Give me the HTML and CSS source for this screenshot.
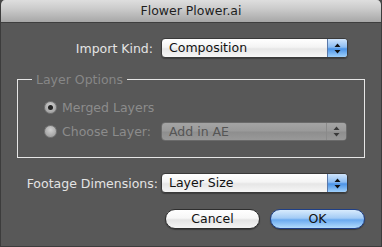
FILE: index.html
```html
<!DOCTYPE html>
<html>
<head>
<meta charset="utf-8">
<link rel="stylesheet" href="styles.css">
</head>
<body>
<div class="window">
  <div class="titlebar">Flower Plower.ai</div>
  <div class="content">
    <div class="row">
      <span class="label label-import">Import Kind:</span>
      <div class="popup">
        <span class="popup-text">Composition</span>
        <span class="popup-arrows"><svg width="7" height="11" viewBox="0 0 7 11"><path d="M3.5 0.5 L6.5 4 L0.5 4 Z M0.5 7 L6.5 7 L3.5 10.5 Z" fill="#111"/></svg></span>
      </div>
    </div>
    <fieldset class="group">
      <legend>Layer Options</legend>
      <div class="radio-row">
        <span class="radio checked"></span>
        <span class="radio-label">Merged Layers</span>
      </div>
      <div class="radio-row">
        <span class="radio"></span>
        <span class="radio-label">Choose Layer:</span>
        <div class="popup disabled">
          <span class="popup-text">Add in AE</span>
          <span class="popup-arrows"><svg width="7" height="11" viewBox="0 0 7 11"><path d="M3.5 0.5 L6.5 4 L0.5 4 Z M0.5 7 L6.5 7 L3.5 10.5 Z" fill="#3a3a3a"/></svg></span>
        </div>
      </div>
    </fieldset>
    <div class="row row-footage">
      <span class="label label-footage">Footage Dimensions:</span>
      <div class="popup">
        <span class="popup-text">Layer Size</span>
        <span class="popup-arrows"><svg width="7" height="11" viewBox="0 0 7 11"><path d="M3.5 0.5 L6.5 4 L0.5 4 Z M0.5 7 L6.5 7 L3.5 10.5 Z" fill="#111"/></svg></span>
      </div>
    </div>
    <div class="buttons">
      <button class="btn">Cancel</button>
      <button class="btn btn-default">OK</button>
    </div>
  </div>
</div>
</body>
</html>
```
FILE: styles.css
```css
html, body {
  margin: 0;
  padding: 0;
  background: #4a4a4a;
}
body {
  font-family: "DejaVu Sans", "Liberation Sans", sans-serif;
  font-size: 12.5px;
}
.window {
  width: 382px;
  height: 247px;
  box-sizing: border-box;
  background: #585858;
  border: 1px solid #3c3c3c;
  border-top: none;
  border-radius: 5px 5px 0 0;
  overflow: hidden;
  display: flex;
  flex-direction: column;
}
.titlebar {
  height: 22px;
  line-height: 22px;
  text-align: center;
  color: #1e1e1e;
  background: linear-gradient(#dedede, #cbcbcb 40%, #a7a7a7);
  border-bottom: 1px solid #3e3e3e;
  flex: none;
}
.content {
  padding: 15px 16px 0 16px;
  display: flex;
  flex-direction: column;
}
.row {
  display: flex;
  align-items: center;
  justify-content: flex-end;
  padding-right: 17px;
  height: 20px;
}
.label {
  color: #e4e4e4;
}
.label-import { margin-right: 8px; }
.label-footage { margin-right: 3px; }
.popup {
  width: 187px;
  height: 20px;
  box-sizing: border-box;
  border: 1px solid #3a3a3a;
  border-radius: 4px;
  background: linear-gradient(#ffffff, #f4f4f4 45%, #e6e6e6 55%, #f6f6f6);
  display: flex;
  align-items: center;
  overflow: hidden;
  box-shadow: 0 1px 1px rgba(0,0,0,0.3);
}
.popup-text {
  flex: 1;
  padding-left: 7px;
  color: #111;
  line-height: 18px;
}
.popup-arrows {
  width: 19px;
  height: 18px;
  display: flex;
  align-items: center;
  justify-content: center;
  background: linear-gradient(#cfe4fb, #8dbdf2 45%, #4b93e6 55%, #9fd0fb);
  border-left: 1px solid #5a78a8;
}
.popup.disabled {
  width: 186px;
  height: 19px;
  margin-left: auto;
  border-color: #6a6a6a;
  background: linear-gradient(#a4a4a4, #9a9a9a 45%, #8e8e8e 55%, #999);
  box-shadow: none;
}
.popup.disabled .popup-text {
  color: #555;
  line-height: 17px;
}
.popup.disabled .popup-arrows {
  height: 17px;
  background: linear-gradient(#a4a4a4, #9a9a9a 45%, #8e8e8e 55%, #999);
  border-left: 1px solid #8a8a8a;
}
.group {
  margin: 14px 0 0 0;
  padding: 10px 17px 16px 14px;
  border: 1px solid #e6e6e6;
  display: flex;
  flex-direction: column;
  gap: 4px;
}
.group legend {
  padding: 0 4px;
  color: #878787;
  line-height: 15px;
}
.radio-row {
  display: flex;
  align-items: center;
  height: 20px;
  margin-left: 12px;
}
.radio {
  width: 13px;
  height: 13px;
  box-sizing: border-box;
  border-radius: 50%;
  border: 1px solid #777;
  background: radial-gradient(circle at 50% 35%, #cfcfcf, #a5a5a5 70%, #9a9a9a);
  margin-right: 5px;
  display: flex;
  align-items: center;
  justify-content: center;
  flex: none;
}
.radio.checked::after {
  content: "";
  width: 5px;
  height: 5px;
  border-radius: 50%;
  background: #222;
}
.radio-label {
  color: #8c8c8c;
}
.row-footage {
  margin-top: 15px;
}
.buttons {
  margin-top: 16px;
  display: flex;
  justify-content: flex-end;
  gap: 10px;
}
.btn {
  width: 95px;
  height: 20px;
  border-radius: 10px;
  border: 1px solid #2e2e2e;
  font-family: "DejaVu Sans", "Liberation Sans", sans-serif;
  font-size: 12.5px;
  color: #111;
  padding: 0;
  line-height: 18px;
  background: linear-gradient(#ffffff, #f7f7f7 45%, #e4e4e4 55%, #f4f4f4);
  box-shadow: 0 1px 1px rgba(0,0,0,0.35);
}
.btn-default {
  border-color: #1f3f86;
  background: linear-gradient(#d8ebfd, #a3cbf5 45%, #6aaaf0 55%, #b3dcfd);
}
```
